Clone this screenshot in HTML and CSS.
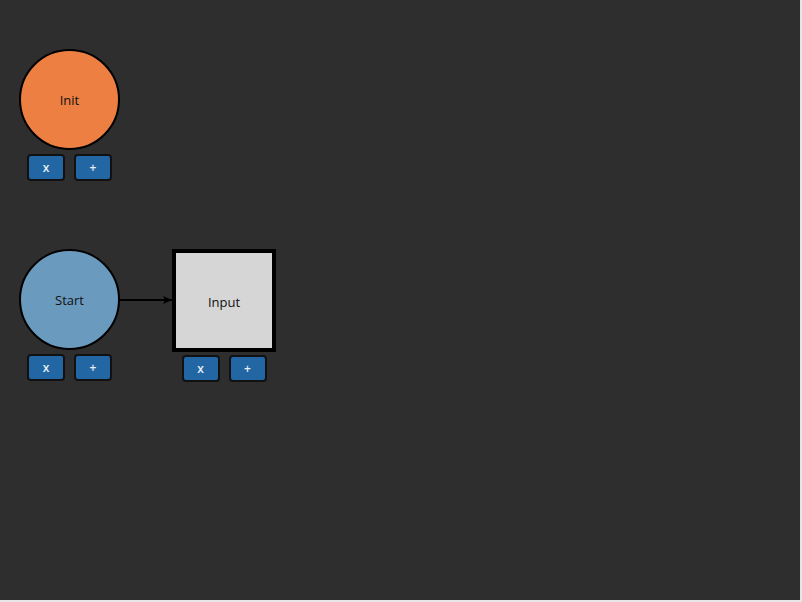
FILE: index.html
```html
<!DOCTYPE html>
<html>
<head>
<meta charset="utf-8">
<link rel="stylesheet" href="styles.css">
</head>
<body>
<div class="canvas">
  <svg class="edges" width="800" height="600">
    <defs>
      <marker id="arr" markerWidth="10" markerHeight="8" refX="9" refY="4" orient="auto" markerUnits="userSpaceOnUse">
        <path d="M0,0 L9,4 L0,8 L2,4 Z" fill="#000"/>
      </marker>
    </defs>
    <line x1="120" y1="300" x2="172" y2="300" stroke="#000" stroke-width="2" marker-end="url(#arr)"/>
  </svg>

  <div class="node node-init">
    <div class="shape circle orange">Init</div>
    <div class="btns"><button class="btn">x</button><button class="btn">+</button></div>
  </div>

  <div class="node node-start">
    <div class="shape circle blue">Start</div>
    <div class="btns"><button class="btn">x</button><button class="btn">+</button></div>
  </div>

  <div class="node node-input">
    <div class="shape square">Input</div>
    <div class="btns"><button class="btn">x</button><button class="btn">+</button></div>
  </div>
</div>
</body>
</html>
```

FILE: styles.css
```css
html, body {
  margin: 0;
  padding: 0;
  background: #e6e6e6;
  width: 802px;
  height: 602px;
  overflow: hidden;
}
.canvas {
  position: relative;
  width: 800px;
  height: 600px;
  background: #2e2e2e;
  font-family: "Open Sans", "Noto Sans", sans-serif;
}
.edges {
  position: absolute;
  left: 0;
  top: 0;
}
.node {
  position: absolute;
  display: flex;
  flex-direction: column;
  align-items: center;
  gap: 4px;
}
.node-init { left: 19px; top: 49px; }
.node-start { left: 19px; top: 249px; }
.node-input { left: 172px; top: 249px; gap: 3px; }
.shape {
  box-sizing: border-box;
  display: flex;
  align-items: center;
  justify-content: center;
  font-size: 13px;
  color: #111;
}
.circle {
  width: 101px;
  height: 101px;
  border-radius: 50%;
  border: 2px solid #000;
}
.orange { background: #ec7f41; }
.blue { background: #6b9abf; }
.square {
  width: 104px;
  height: 103px;
  border: 4px solid #000;
  background: #d6d6d6;
  padding-top: 3px;
}
.btns {
  display: flex;
  gap: 9px;
}
.btn {
  box-sizing: border-box;
  width: 38px;
  height: 27px;
  margin: 0;
  padding: 0;
  border: 2px solid #111;
  border-radius: 4px;
  background: #2267a3;
  color: #e8eef5;
  font-family: "Open Sans", "Noto Sans", sans-serif;
  font-weight: 600;
  font-size: 12px;
  line-height: 1;
}
```
